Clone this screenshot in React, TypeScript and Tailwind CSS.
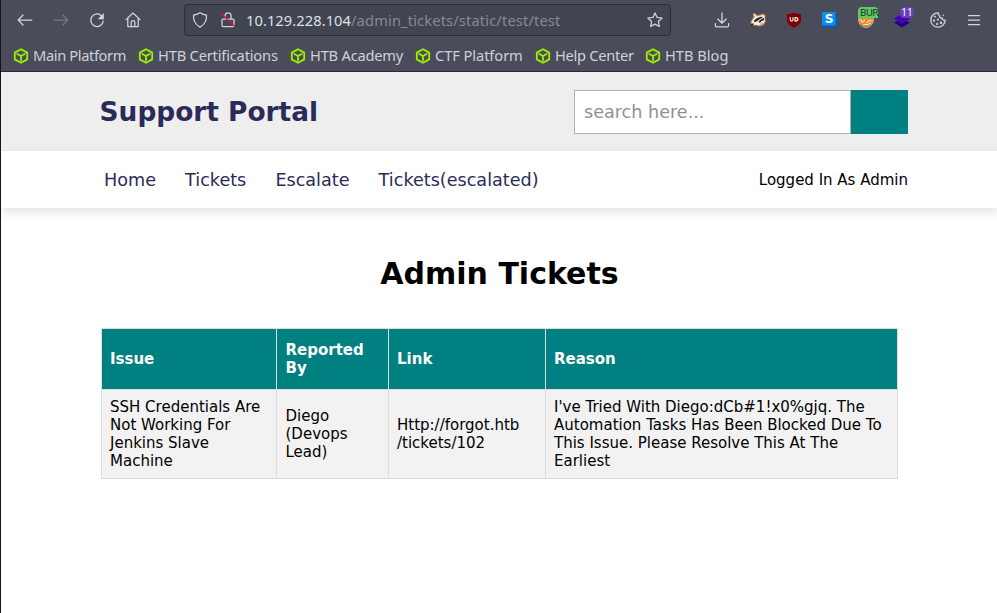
import React from "react";

const bookmarks = [
  { label: "Main Platform", width: "w-[125px]", tracking: "tracking-[-0.37px]" },
  { label: "HTB Certifications", width: "w-[152px]", tracking: "tracking-[-0.18px]" },
  { label: "HTB Academy", width: "w-[125px]", tracking: "tracking-[-0.2px]" },
  { label: "CTF Platform", width: "w-[120px]", tracking: "tracking-[-0.07px]" },
  { label: "Help Center", width: "w-[110px]", tracking: "tracking-[-0.27px]" },
  { label: "HTB Blog", width: "w-[100px]", tracking: "tracking-[0px]" },
];

const tickets = [
  {
    issue: "SSH Credentials Are Not Working For Jenkins Slave Machine",
    reporter: "Diego (Devops Lead)",
    link: ["Http://forgot.htb", "/tickets/102"],
    reason:
      "I've Tried With Diego:dCb#1!x0%gjq. The Automation Tasks Has Been Blocked Due To This Issue. Please Resolve This At The Earliest",
  },
];

type IconProps = { children: React.ReactNode; className?: string };

function Icon({ children, className = "text-[#d2d5df]" }: IconProps) {
  return (
    <svg
      width="16"
      height="16"
      viewBox="0 0 16 16"
      fill="none"
      stroke="currentColor"
      strokeWidth="1.25"
      strokeLinecap="round"
      strokeLinejoin="round"
      className={`block shrink-0 overflow-visible ${className}`}
    >
      {children}
    </svg>
  );
}

function CubeIcon() {
  return (
    <Icon className="text-[#9fef00]">
      <g strokeWidth="1.8">
        <path d="M8 1.2 14.2 4.6v6.8L8 14.8 1.8 11.4V4.6Z" />
        <path d="M4.3 6 8 8l3.7-2M8 8v4.3" />
      </g>
    </Icon>
  );
}

function BadgerIcon() {
  return (
    <Icon>
      <g stroke="none">
        <path d="M0 12.5 1 8.5 3.3 4.4 2.2 1.8 4.8.8 7 3 10 2.2 13.6 1.5 15.8 3 15.2 5.8 16 9.5 14 13 10 14.5 5 13.8Z" fill="#b57a49" />
        <path d="M.8 12 2.2 8.5 4.8 5 3.6 2.3 5 2 6.8 4.2 13.7 2.7 14.7 4.4 14.8 9.6 12.9 12.2 9.4 13.6 5 12.8Z" fill="#f5eee1" />
        <path d="m3.6 9 2.8-2.6 4.4-1.7 2.4.2-3.2 2L7.5 8.8 4.8 10.2ZM8.2 9.8l3-2.6 2.9-1.4-.2 2.5-2.2.8-1.6 1.7Z" fill="#292828" />
        <path d="M.8 11.4h2.8l-.7 1.5H.9Z" fill="#171717" />
        <path d="m9.2 12.2 2.7-1.1 1.5.2L11 13Z" fill="#d29b6c" />
      </g>
    </Icon>
  );
}

function Toolbar() {
  return (
    <div className="flex h-10 items-center pl-4">
      <div className="flex w-[167px] items-center gap-5">
        <Icon><path d="M14.8 8H1.3M6 3 1.2 8 6 13" /></Icon>
        <Icon className="text-[#777a86]"><path d="M1.2 8h13.4M10 3l4.7 5L10 13" /></Icon>
        <Icon><path d="M12.7 4A6.3 6.3 0 1 0 14.3 9" /><path d="M14.8 1v6.2H8.8Z" fill="currentColor" stroke="none" /></Icon>
        <Icon><path d="M1 7.6 8 1l7 6.6M2.8 6.2v8.4h10.4V6.2M6.2 14.6V10c0-2 3.6-2 3.6 0v4.6" /></Icon>
      </div>
      <div className="flex h-8 w-[487px] items-center rounded border border-[#2b2d3b] bg-[#414550] pr-[7px] pl-[7px]">
        <Icon><path d="M8 .8c2 1.5 4 1.9 6.5 2.3.4 5.6-1.8 9.5-6.5 12C3.3 12.6 1.1 8.7 1.5 3.1 4 2.7 6 2.3 8 .8Z" /></Icon>
        <div className="ml-3">
          <Icon>
            <path d="M5.1 5V3.7c0-3.8 6-3.8 6 0V7M2 8.2v5.2q0 1.2 1.2 1.2h9.6q1.2 0 1.2-1.2V8.2Q14 7 12.8 7H3.2Q2 7 2 8.2Z" />
            <path d="m1.5 1.7 13 12.6" stroke="#e1134b" strokeWidth="1.3" />
          </Icon>
        </div>
        <div className="ml-[10px] flex-1 text-[14.65px] tracking-[0.15px] whitespace-nowrap text-[#858995]">
          <span className="tracking-[0.08px] text-[#dce0ea]">10.129.228.104</span>/admin_tickets/static/test/test
        </div>
        <Icon><path d="m8 .9 2.1 4.5 5 .6-3.7 3.5.9 5L8 12.1l-4.3 2.4.9-5L.9 6l5-.6Z" /></Icon>
      </div>
      <div className="ml-[43px] flex items-center gap-5">
        <Icon><path d="M8 .8v10.4M3.8 7 8 11.2 12.2 7M1.4 11.5v2.2q0 1.1 1.1 1.1h11q1.1 0 1.1-1.1v-2.2" /></Icon>
        <BadgerIcon />
        <Icon>
          <path d="M8 .5c2.2 1.3 4.6 1.5 7 1.6v6.1c0 3.5-3.4 5.5-7 7.5-3.6-2-7-4-7-7.5V2.1C3.4 2 5.8 1.8 8 .5Z" fill="#800000" stroke="none" />
          <path d="M4.2 5.6v2q0 1.5 1.4 1.5T7 7.6v-2M9 9.1V5.6h.8q2 0 2 1.75t-2 1.75Z" stroke="#f5e9e9" strokeWidth="1.2" />
        </Icon>
        <div className="relative h-4 w-4">
          <Icon>
            <path d="M13.5 0 16 2.5V16H2.5L0 13.5Z" fill="#0f5b9c" stroke="none" />
            <path d="M0 0h13.5v13.5H0Z" fill="#0b8df4" stroke="none" />
          </Icon>
          <span className="absolute top-0 left-0 w-[14px] text-center font-['DejaVu_Sans',sans-serif] text-[12px] leading-[14px] font-bold text-white">S</span>
        </div>
        <div className="relative h-4 w-4">
          <Icon>
            <circle cx="8" cy="8" r="7.4" fill="#e88a28" stroke="#c4b7a6" strokeWidth="1" />
            <path d="m2.3 7.5 2.2 2.8 2.2-2.4M9 10.4l2.4-2.2 2 .5M5.5 12.6h4.7l2.2-2" stroke="#ffe5bd" strokeWidth="1.1" />
            <path d="M3.2 13q4.8 3 9.3 0" stroke="#8a7768" strokeWidth="1" />
          </Icon>
          <div className="absolute -top-[5px] left-0 h-[11px] w-5 rounded-t-sm bg-[#62c966] pl-0.5 font-['DejaVu_Sans',sans-serif] text-[9.5px] leading-[11px] tracking-[-0.6px] text-[#173823]">BUR</div>
        </div>
        <div className="relative h-4 w-4">
          <Icon>
            <path d="m0 10.5 8-4 8 4-8 5Z" fill="#220083" stroke="none" />
            <path d="m0 6.5 8-5 8 5-8 5.5Z" fill="#4604ad" stroke="none" />
          </Icon>
          <div className="absolute -top-[5px] left-[6px] h-[11px] w-[14px] rounded-sm bg-[#6a3dba] text-center text-[10px] leading-[11px] text-white">11</div>
        </div>
        <Icon>
          <path d="M8.4.8C4.2.4.8 3.8.8 8s3.2 7.2 7.2 7.2 7.2-3.2 7.2-7.1c-2 .6-3.1-.5-2.7-2-2 .3-3.4-1-2.8-2.8-1.4-.2-1.8-1.2-1.3-2.5Z" />
          <g fill="currentColor" stroke="none"><circle cx="5" cy="4.5" r="1" /><circle cx="4" cy="8.6" r="1.1" /><circle cx="8" cy="7.6" r="1.1" /><circle cx="7" cy="12" r="1.1" /><circle cx="11" cy="10.8" r="1.2" /><circle cx="13.4" cy="3.2" r=".8" /></g>
        </Icon>
        <Icon><path d="M2.4 3.5h11.2M2.4 8h11.2M2.4 12.5h11.2" /></Icon>
      </div>
    </div>
  );
}

function BrowserChrome() {
  return (
    <div className="h-[72px] border-b border-[#2b2a3a] bg-[#4a4d59] font-['Noto_Sans',sans-serif] text-[#ced1dc]">
      <Toolbar />
      <div className="flex h-[31px] items-center pl-3">
        {bookmarks.map((item) => (
          <div key={item.label} className={`flex items-center gap-1 text-[14.65px] leading-5 whitespace-nowrap ${item.width}`}>
            <CubeIcon />
            <span className={`pb-0.5 ${item.tracking}`}>{item.label}</span>
          </div>
        ))}
      </div>
    </div>
  );
}

export default function App() {
  return (
    <div className="h-[613px] overflow-hidden border-l border-[#12151f] bg-white font-['DejaVu_Sans',sans-serif] text-[15px] leading-[18px] text-black">
      <BrowserChrome />
      <header className="flex h-[79px] items-center justify-between bg-[#eeeeee] pr-[89px] pl-[98.6px]">
        <h1 className="text-[26.4px] leading-8 font-bold text-[#2b2b5a]">Support Portal</h1>
        <div className="flex h-11 w-[334px]">
          <input
            aria-label="Search"
            placeholder="search here..."
            className="min-w-0 flex-1 border border-[#b0b0b0] bg-white px-[9px] text-[17.6px] placeholder:text-[#919191]"
          />
          <button aria-label="Submit search" className="w-[57px] bg-[#008080]" />
        </div>
      </header>
      <nav className="flex h-[57px] items-center justify-between bg-white pr-[89px] pl-[103px] shadow-[0_5px_10px_rgba(0,0,0,0.1)]">
        <div className="flex gap-[29.1px] text-[17.6px] text-[#2b2b5a]">
          <a>Home</a>
          <a>Tickets</a>
          <a>Escalate</a>
          <a>Tickets(escalated)</a>
        </div>
        <span>Logged In As Admin</span>
      </nav>
      <main className="pr-[99px] pl-[100px]">
        <h2 className="mt-12 text-center text-[30px] leading-9 font-bold">Admin Tickets</h2>
        <table className="mt-9 w-[796px] table-fixed border-collapse text-left">
          <colgroup>
            <col className="w-[175px]" />
            <col className="w-[112px]" />
            <col className="w-[157px]" />
            <col className="w-[352px]" />
          </colgroup>
          <thead className="bg-[#008080] text-white">
            <tr className="h-[61px]">
              {["Issue", "Reported By", "Link", "Reason"].map((heading) => (
                <th key={heading} className="border border-[#dddddd] px-2 font-bold nth-2:pl-[8.5px]">{heading}</th>
              ))}
            </tr>
          </thead>
          <tbody>
            {tickets.map((ticket) => (
              <tr key={ticket.issue} className="h-[89px] bg-[#f2f2f2]">
                <td className="border border-[#dddddd] px-2">{ticket.issue}</td>
                <td className="border border-[#dddddd] pr-2 pl-[8.5px]">{ticket.reporter}</td>
                <td className="border border-[#dddddd] px-2">{ticket.link[0]}<br />{ticket.link[1]}</td>
                <td className="border border-[#dddddd] px-2">{ticket.reason}</td>
              </tr>
            ))}
          </tbody>
        </table>
      </main>
    </div>
  );
}
